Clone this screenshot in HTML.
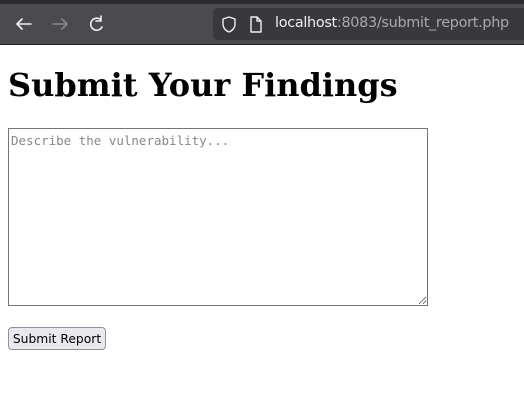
<!DOCTYPE html>
<html><head><style>
html,body{margin:0;padding:0;background:#fff;width:524px;height:413px;overflow:hidden}
.bar{position:absolute;left:0;top:0;width:524px;height:44px;background:#4a4a4f;border-bottom:1px solid #202020}
.top{position:absolute;left:0;top:0;width:524px;height:4px;background:#2b2a2e}
.url{position:absolute;left:213px;top:8px;width:320px;height:32px;background:#38383d;border-radius:5px}
.url span{position:absolute;left:62px;top:7px;font:14.4px "DejaVu Sans","Liberation Sans",sans-serif;color:#aaa;letter-spacing:-0.3px;white-space:nowrap}
.url b{font-weight:normal;color:#f0f0f0}
h1{position:absolute;left:8px;top:66px;margin:0;font:bold 32px "DejaVu Serif","Liberation Serif",serif;color:#000;white-space:nowrap}
textarea{position:absolute;left:8px;top:128px;width:420px;height:178px;box-sizing:border-box;border:1px solid #767676;padding:4px 2px;font:12.5px "DejaVu Sans Mono","Liberation Mono",monospace;resize:both;margin:0}
textarea::placeholder{color:#888}
button{position:absolute;left:8px;top:327px;width:98px;height:23px;box-sizing:border-box;background:#e9e9ed;border:1px solid #8f8f9d;border-radius:4px;font:12.3px "DejaVu Sans","Liberation Sans",sans-serif;color:#000;padding:0}
</style></head><body>
<div class="bar"><div class="top"></div>
<svg style="position:absolute;left:0;top:0" width="213" height="44">
<g fill="none" stroke-width="1.6" stroke-linecap="round" stroke-linejoin="round">
<path d="M17 24H31M17 24L22 19M17 24L22 29" stroke="#f0f0f0"/>
<path d="M67 24H53M67 24L62 19M67 24L62 29" stroke="#8a8a8a"/>
<path d="M101 20A6 6 0 1 0 102 27M101 16V21H96" stroke="#f0f0f0"/>
</g></svg>
<div class="url">
<svg style="position:absolute;left:0;top:0" width="60" height="32"><g fill="none" stroke="#f0f0f0" stroke-width="1.4" stroke-linejoin="round">
<path d="M16 9L22 11V16C22 20 19 23 16 24C13 23 10 20 10 16V11Z"/>
<path d="M38 9H44L48 13V24H38Z M44 9V13H48"/></g></svg>
<span><b>localhost</b>:8083/submit_report.php</span></div>
</div>
<h1>Submit Your Findings</h1>
<textarea placeholder="Describe the vulnerability..."></textarea>
<button>Submit Report</button>
</body></html>
